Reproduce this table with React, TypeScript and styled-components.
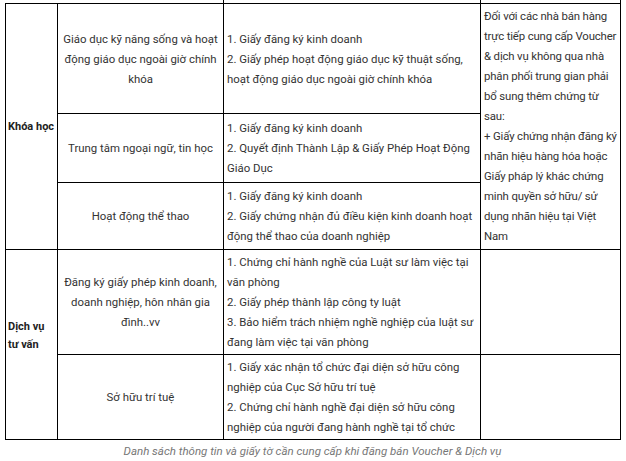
import styled, { createGlobalStyle } from 'styled-components';

const GlobalStyle = createGlobalStyle`
  html, body {
    margin: 0;
    padding: 0;
    background: #ffffff;
  }
  body {
    font-family: Roboto, 'Noto Sans', 'Liberation Sans', sans-serif;
    color: #333333;
  }
`;

interface ServiceRow {
  name: string;
  docs: string;
  height: number;
}

const courseRows: ServiceRow[] = [
  {
    name: 'Giáo dục kỹ năng sống và hoạt động giáo dục ngoài giờ chính khóa',
    docs: '1. Giấy đăng ký kinh doanh\n2. Giấy phép hoạt động giáo dục kỹ thuật sống, hoạt động giáo dục ngoài giờ chính khóa',
    height: 110,
  },
  {
    name: 'Trung tâm ngoại ngữ, tin học',
    docs: '1. Giấy đăng ký kinh doanh\n2. Quyết định Thành Lập & Giấy Phép Hoạt Động Giáo Dục',
    height: 69,
  },
  {
    name: 'Hoạt động thể thao',
    docs: '1. Giấy đăng ký kinh doanh\n2. Giấy chứng nhận đủ điều kiện kinh doanh hoạt động thể thao của doanh nghiệp',
    height: 67,
  },
];

const consultRows: ServiceRow[] = [
  {
    name: 'Đăng ký giấy phép kinh doanh, doanh nghiệp, hôn nhân gia đình..vv',
    docs: '1. Chứng chỉ hành nghề của Luật sư làm việc tại văn phòng\n2. Giấy phép thành lập công ty luật\n3. Bảo hiểm trách nhiệm nghề nghiệp của luật sư đang làm việc tại văn phòng',
    height: 104,
  },
  {
    name: 'Sở hữu trí tuệ',
    docs: '1. Giấy xác nhận tổ chức đại diện sở hữu công nghiệp của Cục Sở hữu trí tuệ\n2. Chứng chỉ hành nghề đại diện sở hữu công nghiệp của người đang hành nghề tại tổ chức',
    height: 85,
  },
];

// wrapped the way the original column wraps it
const noteLines = [
  'Đối với các nhà bán hàng',
  'trực tiếp cung cấp Voucher',
  '& dịch vụ không qua nhà',
  'phân phối trung gian phải',
  'bổ sung thêm chứng từ',
  'sau:',
  '+ Giấy chứng nhận đăng ký',
  'nhãn hiệu hàng hóa hoặc',
  'Giấy pháp lý khác chứng',
  'minh quyền sở hữu/ sử',
  'dụng nhãn hiệu tại Việt',
  'Nam',
];

const App = () => {
  return (
    <S.Page>
      <GlobalStyle />
      <S.Table>
        <colgroup>
          <col style={{ width: 52 }} />
          <col style={{ width: 166 }} />
          <col style={{ width: 257 }} />
          <col style={{ width: 140 }} />
        </colgroup>
        <tbody>
          <S.CutRow>
            <S.CutCell colSpan={2} $first />
            <S.CutCell />
            <S.CutCell />
          </S.CutRow>
          {courseRows.map((row, i) => (
            <S.Row key={row.name} $height={row.height}>
              {i === 0 && (
                <S.CategoryCell rowSpan={courseRows.length}>Khóa học</S.CategoryCell>
              )}
              <S.ServiceCell>{row.name}</S.ServiceCell>
              <S.DocCell>{row.docs}</S.DocCell>
              {i === 0 && (
                <S.NoteCell rowSpan={courseRows.length}>{noteLines.join('\n')}</S.NoteCell>
              )}
            </S.Row>
          ))}
          {consultRows.map((row, i) => (
            <S.Row key={row.name} $height={row.height}>
              {i === 0 && (
                <S.CategoryCell rowSpan={consultRows.length}>
                  {'Dịch vụ\ntư vấn\n\u00a0'}
                </S.CategoryCell>
              )}
              <S.ServiceCell>{row.name}</S.ServiceCell>
              <S.DocCell>{row.docs}</S.DocCell>
              <S.NoteCell />
            </S.Row>
          ))}
        </tbody>
      </S.Table>
      <S.Caption>
        Danh sách thông tin và giấy tờ cần cung cấp khi đăng bán Voucher &amp; Dịch vụ
      </S.Caption>
    </S.Page>
  );
};

interface RowProps {
  $height: number;
}

interface CutProps {
  $first?: boolean;
}

const S = {
  Page: styled.div`
    width: 626px;
    padding-left: 5px;
    box-sizing: border-box;
  `,
  Table: styled.table`
    width: 615px;
    table-layout: fixed;
    border-collapse: collapse;
    font-size: 11.4px;
    line-height: 20px;
  `,
  CutRow: styled.tr`
    height: 3px;
  `,
  CutCell: styled.td<CutProps>`
    padding: 0;
    height: 3px;
    border-right: 1px solid #000;
    border-bottom: 1px solid #000;
    ${({ $first }) => ($first ? 'border-left: none;' : '')}
  `,
  Row: styled.tr<RowProps>`
    height: ${({ $height }) => $height}px;
  `,
  CategoryCell: styled.td`
    border: 1px solid #000;
    padding: 2px 0 2px 2px;
    font-weight: 700;
    font-size: 11px;
    color: #222;
    vertical-align: middle;
    white-space: pre-line;
    line-height: 18px;
  `,
  ServiceCell: styled.td`
    border: 1px solid #000;
    padding: 2px 3px;
    text-align: center;
    vertical-align: middle;
  `,
  DocCell: styled.td`
    border: 1px solid #000;
    padding: 2px 3px;
    vertical-align: middle;
    white-space: pre-line;
  `,
  NoteCell: styled.td`
    border: 1px solid #000;
    padding: 2px 0 2px 3px;
    vertical-align: top;
    white-space: pre;
    letter-spacing: -0.15px;
    overflow: hidden;
  `,
  Caption: styled.div`
    width: 615px;
    margin-top: 3px;
    text-align: center;
    font-size: 11.5px;
    font-style: italic;
    line-height: 16px;
    color: #777;
  `,
};

export default App;
